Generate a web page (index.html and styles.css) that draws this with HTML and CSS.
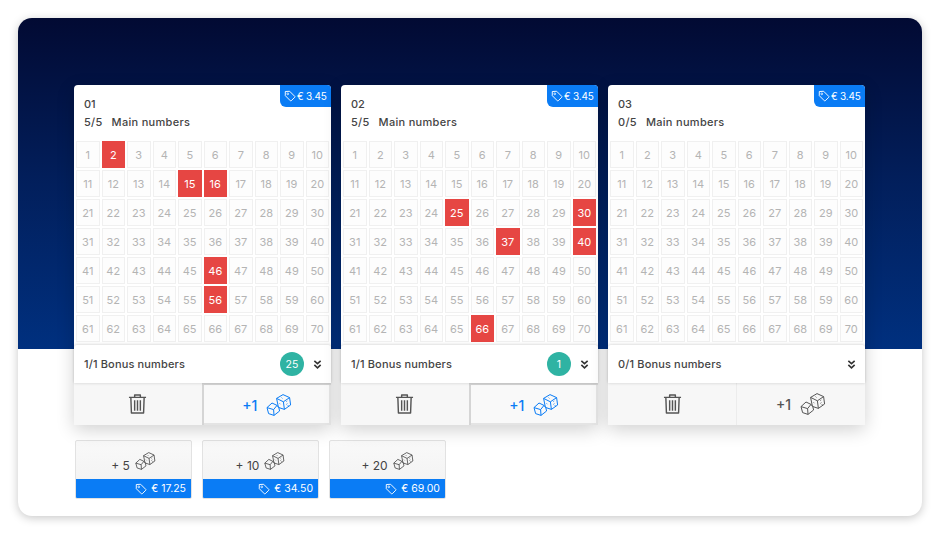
FILE: index.html
```html
<!DOCTYPE html>
<html lang="en">
<head>
    <meta charset="UTF-8">
    <title>Lottery tickets</title>
    <link rel="stylesheet" href="styles.css">
</head>
<body>

    <!-- Shared icons -->
    <svg class="icon-defs" width="0" height="0">
        <symbol id="tag" viewBox="0 0 14 14">
            <path d="M1.5 1.8 L6.6 1.5 L12.6 7.5 Q13 8 12.6 8.4 L8.4 12.6 Q8 13 7.5 12.6 L1.5 6.6 Z" fill="none" stroke="currentColor" stroke-width="1.1" stroke-linejoin="round"/>
            <circle cx="4.4" cy="4.5" r="1" fill="none" stroke="currentColor" stroke-width="0.9"/>
        </symbol>
        <symbol id="dice" viewBox="0 0 26 22">
            <g fill="none" stroke="currentColor" stroke-width="1" stroke-linejoin="round">
                <path d="M6 9 L11 11.4 L12.8 13.6 L13.6 17 L8 21.4 L2.6 19.6 L1 13.6 Z"/>
                <path d="M1 13.6 L7.6 15.6 L11 11.4 M7.6 15.6 L8 21.4"/>
                <path d="M17 0.6 L23.6 3.6 L24.6 11 L18.4 15.4 L12.4 13.4 L10.6 4.4 Z"/>
                <path d="M10.6 4.4 L17.4 7.8 L23.6 3.6 M17.4 7.8 L18.4 15.4"/>
                <path d="M15.6 3.6 L16.4 4.4 M13.6 9.4 L14.4 10.2 M20.4 10.4 L21.4 9.6 M20.4 7.6 L21.2 7 M21.6 12 L22.4 11.2" stroke-width="0.9"/>
            </g>
        </symbol>
        <symbol id="trash" viewBox="0 0 20 22">
            <g fill="none" stroke="currentColor" stroke-width="1.5" stroke-linejoin="round">
                <path d="M1 4 H19 M7 4 V1.5 H13 V4"/>
                <path d="M3 4 L3.6 20.5 H16.4 L17 4"/>
                <path d="M7 7 V18 M10 7 V18 M13 7 V18"/>
            </g>
        </symbol>
        <symbol id="chevrons" viewBox="0 0 10 11">
            <path d="M1.5 1.5 L5 4.5 L8.5 1.5 M1.5 6 L5 9.2 L8.5 6" fill="none" stroke="currentColor" stroke-width="1.8"/>
        </symbol>
    </svg>

    <div class="panel">
        <div class="tickets">

            <!-- Ticket 01 -->
            <div class="ticket">
                <div class="price"><svg class="tag-icon"><use href="#tag"/></svg>€ 3.45</div>
                <div class="ticket-head">
                    <div>01</div>
                    <div class="count"><span>5/5</span><span>Main numbers</span></div>
                </div>
                <div class="numbers">
                    <span>1</span><span class="on">2</span><span>3</span><span>4</span><span>5</span><span>6</span><span>7</span><span>8</span><span>9</span><span>10</span>
                    <span>11</span><span>12</span><span>13</span><span>14</span><span class="on">15</span><span class="on">16</span><span>17</span><span>18</span><span>19</span><span>20</span>
                    <span>21</span><span>22</span><span>23</span><span>24</span><span>25</span><span>26</span><span>27</span><span>28</span><span>29</span><span>30</span>
                    <span>31</span><span>32</span><span>33</span><span>34</span><span>35</span><span>36</span><span>37</span><span>38</span><span>39</span><span>40</span>
                    <span>41</span><span>42</span><span>43</span><span>44</span><span>45</span><span class="on">46</span><span>47</span><span>48</span><span>49</span><span>50</span>
                    <span>51</span><span>52</span><span>53</span><span>54</span><span>55</span><span class="on">56</span><span>57</span><span>58</span><span>59</span><span>60</span>
                    <span>61</span><span>62</span><span>63</span><span>64</span><span>65</span><span>66</span><span>67</span><span>68</span><span>69</span><span>70</span>
                </div>
                <div class="bonus">
                    <span class="bonus-label">1/1 Bonus numbers</span>
                    <span class="ball">25</span>
                    <svg class="chevrons"><use href="#chevrons"/></svg>
                </div>
                <div class="actions">
                    <button class="action"><svg class="trash"><use href="#trash"/></svg></button>
                    <button class="action active">+1 <svg class="dice"><use href="#dice"/></svg></button>
                </div>
            </div>

            <!-- Ticket 02 -->
            <div class="ticket">
                <div class="price"><svg class="tag-icon"><use href="#tag"/></svg>€ 3.45</div>
                <div class="ticket-head">
                    <div>02</div>
                    <div class="count"><span>5/5</span><span>Main numbers</span></div>
                </div>
                <div class="numbers">
                    <span>1</span><span>2</span><span>3</span><span>4</span><span>5</span><span>6</span><span>7</span><span>8</span><span>9</span><span>10</span>
                    <span>11</span><span>12</span><span>13</span><span>14</span><span>15</span><span>16</span><span>17</span><span>18</span><span>19</span><span>20</span>
                    <span>21</span><span>22</span><span>23</span><span>24</span><span class="on">25</span><span>26</span><span>27</span><span>28</span><span>29</span><span class="on">30</span>
                    <span>31</span><span>32</span><span>33</span><span>34</span><span>35</span><span>36</span><span class="on">37</span><span>38</span><span>39</span><span class="on">40</span>
                    <span>41</span><span>42</span><span>43</span><span>44</span><span>45</span><span>46</span><span>47</span><span>48</span><span>49</span><span>50</span>
                    <span>51</span><span>52</span><span>53</span><span>54</span><span>55</span><span>56</span><span>57</span><span>58</span><span>59</span><span>60</span>
                    <span>61</span><span>62</span><span>63</span><span>64</span><span>65</span><span class="on">66</span><span>67</span><span>68</span><span>69</span><span>70</span>
                </div>
                <div class="bonus">
                    <span class="bonus-label">1/1 Bonus numbers</span>
                    <span class="ball">1</span>
                    <svg class="chevrons"><use href="#chevrons"/></svg>
                </div>
                <div class="actions">
                    <button class="action"><svg class="trash"><use href="#trash"/></svg></button>
                    <button class="action active">+1 <svg class="dice"><use href="#dice"/></svg></button>
                </div>
            </div>

            <!-- Ticket 03 -->
            <div class="ticket">
                <div class="price"><svg class="tag-icon"><use href="#tag"/></svg>€ 3.45</div>
                <div class="ticket-head">
                    <div>03</div>
                    <div class="count"><span>0/5</span><span>Main numbers</span></div>
                </div>
                <div class="numbers">
                    <span>1</span><span>2</span><span>3</span><span>4</span><span>5</span><span>6</span><span>7</span><span>8</span><span>9</span><span>10</span>
                    <span>11</span><span>12</span><span>13</span><span>14</span><span>15</span><span>16</span><span>17</span><span>18</span><span>19</span><span>20</span>
                    <span>21</span><span>22</span><span>23</span><span>24</span><span>25</span><span>26</span><span>27</span><span>28</span><span>29</span><span>30</span>
                    <span>31</span><span>32</span><span>33</span><span>34</span><span>35</span><span>36</span><span>37</span><span>38</span><span>39</span><span>40</span>
                    <span>41</span><span>42</span><span>43</span><span>44</span><span>45</span><span>46</span><span>47</span><span>48</span><span>49</span><span>50</span>
                    <span>51</span><span>52</span><span>53</span><span>54</span><span>55</span><span>56</span><span>57</span><span>58</span><span>59</span><span>60</span>
                    <span>61</span><span>62</span><span>63</span><span>64</span><span>65</span><span>66</span><span>67</span><span>68</span><span>69</span><span>70</span>
                </div>
                <div class="bonus">
                    <span class="bonus-label">0/1 Bonus numbers</span>
                    <svg class="chevrons"><use href="#chevrons"/></svg>
                </div>
                <div class="actions">
                    <button class="action split"><svg class="trash"><use href="#trash"/></svg></button>
                    <button class="action">+1 <svg class="dice"><use href="#dice"/></svg></button>
                </div>
            </div>
        </div>

        <!-- Quick picks -->
        <div class="packs">
            <div class="pack">
                <div class="pack-top">+ 5 <svg class="pack-dice"><use href="#dice"/></svg></div>
                <div class="pack-price"><svg class="tag-icon"><use href="#tag"/></svg>€ 17.25</div>
            </div>
            <div class="pack">
                <div class="pack-top">+ 10 <svg class="pack-dice"><use href="#dice"/></svg></div>
                <div class="pack-price"><svg class="tag-icon"><use href="#tag"/></svg>€ 34.50</div>
            </div>
            <div class="pack">
                <div class="pack-top">+ 20 <svg class="pack-dice"><use href="#dice"/></svg></div>
                <div class="pack-price"><svg class="tag-icon"><use href="#tag"/></svg>€ 69.00</div>
            </div>
        </div>
    </div>

</body>
</html>
```

FILE: styles.css
```css
* {
    box-sizing: border-box;
}

body {
    margin: 0;
    padding: 18px;
    background-color: #fff;
    font-family: "Inter", "Noto Sans", sans-serif;
    color: #444;
}

.icon-defs {
    position: absolute;
}

.panel {
    height: 498px;
    padding: 67px 57px 0 56px;
    border-radius: 14px;
    background-color: #fff;
    background-image: linear-gradient(#020a33 0%, #021f5c 50%, #00307f 100%);
    background-size: 100% 331px;
    background-repeat: no-repeat;
    box-shadow: 0 2px 10px rgba(0, 0, 0, 0.22);
}

.tickets {
    display: flex;
    gap: 10px;
}

.ticket {
    position: relative;
    width: 257px;
    height: 340px;
    border-radius: 4px;
    background-color: #fff;
    box-shadow: 0 5px 18px rgba(0, 0, 0, 0.18);
}

.price {
    position: absolute;
    top: 0;
    right: 0;
    display: flex;
    align-items: center;
    gap: 1px;
    width: 51px;
    height: 22px;
    padding-left: 4px;
    border-radius: 0 4px 0 6px;
    background-color: #0a7cf5;
    color: #fff;
    font-size: 10px;
    letter-spacing: -0.2px;
    white-space: nowrap;
}

.tag-icon {
    width: 12px;
    height: 12px;
    flex-shrink: 0;
}

.ticket-head {
    height: 56px;
    padding: 10px 10px 0;
    font-size: 11px;
    line-height: 18px;
    font-weight: 500;
}

.count {
    display: flex;
    gap: 9px;
    letter-spacing: 0.3px;
}

.numbers {
    display: grid;
    grid-template-columns: repeat(10, 1fr);
    grid-auto-rows: 27px;
    gap: 2px;
    padding: 0 2px;
}

.numbers span {
    display: flex;
    align-items: center;
    justify-content: center;
    padding-top: 1px;
    border: 1px solid #f0f0f0;
    background-color: #fdfdfd;
    color: #b4b4b4;
    font-size: 11px;
}

.numbers .on {
    border-color: #e64643;
    background-color: #e64643;
    color: #fff;
}

.bonus {
    position: relative;
    display: flex;
    align-items: center;
    height: 38px;
    margin-top: 3px;
    padding: 0 9px 0 10px;
    background-color: #fff;
    border-radius: 3px 3px 0 0;
    box-shadow: 0 -1px 3px rgba(0, 0, 0, 0.12), 0 1px 3px rgba(0, 0, 0, 0.08);
    font-size: 11px;
    font-weight: 500;
    letter-spacing: 0.15px;
}

.bonus-label {
    flex: 1;
}

.ball {
    display: flex;
    align-items: center;
    justify-content: center;
    width: 24px;
    height: 24px;
    margin-right: 9px;
    border-radius: 50%;
    background-color: #2fb3a3;
    color: #fff;
    font-size: 10.5px;
    letter-spacing: 0;
    font-weight: 400;
}

.chevrons {
    width: 9px;
    height: 11px;
    color: #333;
}

.actions {
    display: flex;
    height: 42px;
}

.action {
    flex: 1;
    display: flex;
    align-items: center;
    justify-content: center;
    gap: 9px;
    padding: 0;
    border: none;
    background-color: #f7f7f7;
    color: #555;
    font-family: inherit;
    font-size: 14px;
    font-weight: 500;
}

.action.active {
    border-top: 2px solid #d5d5d5;
    border-left: 2px solid #d5d5d5;
    box-shadow: inset -2px -2px 0 #e4e4e4;
    background-color: #f9f9f9;
    color: #0a7cf5;
}

.action.split {
    border-right: 1px solid #ececec;
}

.trash {
    width: 19px;
    height: 22px;
    color: #555;
}

.dice {
    width: 26px;
    height: 22px;
}

.packs {
    display: flex;
    gap: 10px;
    margin: 15px 0 0 1px;
}

.pack {
    width: 117px;
    height: 59px;
    border: 1px solid #e2e2e2;
    border-radius: 2px;
    background-image: linear-gradient(#f9f9f9, #f1f1f1);
    overflow: hidden;
}

.pack-top {
    display: flex;
    align-items: center;
    justify-content: center;
    gap: 5px;
    height: 38px;
    padding-top: 10px;
    color: #444;
    font-size: 12px;
}

.pack-dice {
    width: 21px;
    height: 18px;
    margin-top: -8px;
}

.pack-price {
    display: flex;
    align-items: center;
    justify-content: flex-end;
    gap: 4px;
    height: 19px;
    padding-right: 5px;
    background-color: #0a7cf5;
    color: #fff;
    font-size: 10.5px;
}
```
